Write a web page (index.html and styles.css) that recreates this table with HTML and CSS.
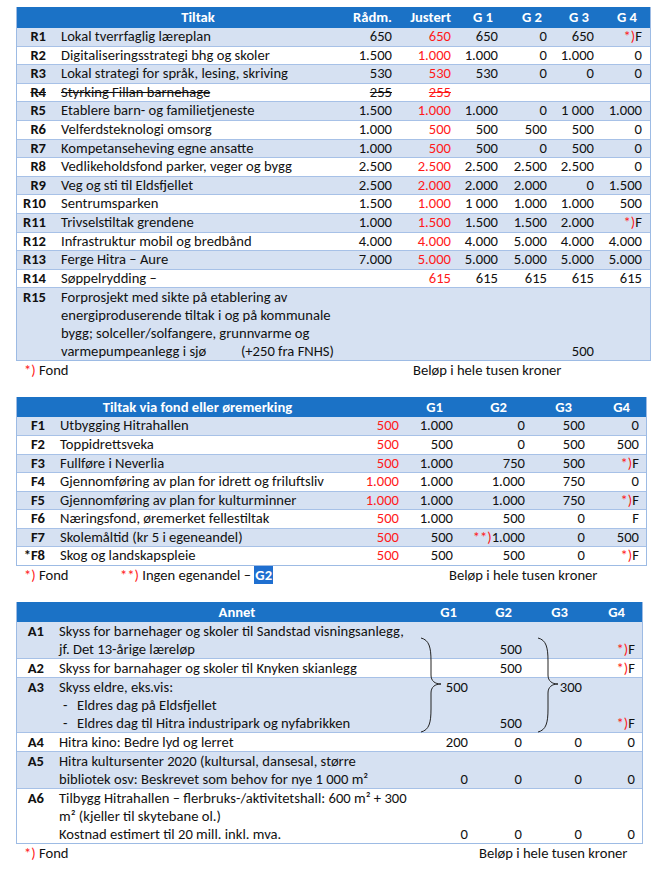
FILE: index.html
```html
<!DOCTYPE html>
<html lang="no">
<head>
<meta charset="utf-8">
<title>Tiltak</title>
<link rel="stylesheet" href="styles.css">
</head>
<body>
<div class="page">

  <section class="tbl t1">
    <div class="row head">
      <div class="c code"></div><div class="c txt ctr">Tiltak</div>
      <div class="c num">Rådm.</div><div class="c num">Justert</div>
      <div class="c num hg">G 1</div><div class="c num hg">G 2</div><div class="c num hg">G 3</div><div class="c num hg">G 4</div>
    </div>
    <div class="row alt"><div class="c code">R1</div><div class="c txt">Lokal tverrfaglig læreplan</div><div class="c num">650</div><div class="c num red">650</div><div class="c num">650</div><div class="c num">0</div><div class="c num">650</div><div class="c num"><span class="red">*)</span>F</div></div>
    <div class="row"><div class="c code">R2</div><div class="c txt">Digitaliseringsstrategi bhg og skoler</div><div class="c num">1.500</div><div class="c num red">1.000</div><div class="c num">1.000</div><div class="c num">0</div><div class="c num">1.000</div><div class="c num">0</div></div>
    <div class="row alt"><div class="c code">R3</div><div class="c txt">Lokal strategi for språk, lesing, skriving</div><div class="c num">530</div><div class="c num red">530</div><div class="c num">530</div><div class="c num">0</div><div class="c num">0</div><div class="c num">0</div></div>
    <div class="row"><div class="c code"><s>R4</s></div><div class="c txt"><s>Styrking Fillan barnehage</s></div><div class="c num"><s>255</s></div><div class="c num red"><s>255</s></div><div class="c num"></div><div class="c num"></div><div class="c num"></div><div class="c num"></div></div>
    <div class="row alt"><div class="c code">R5</div><div class="c txt">Etablere barn- og familietjeneste</div><div class="c num">1.500</div><div class="c num red">1.000</div><div class="c num">1.000</div><div class="c num">0</div><div class="c num">1 000</div><div class="c num">1.000</div></div>
    <div class="row"><div class="c code">R6</div><div class="c txt">Velferdsteknologi omsorg</div><div class="c num">1.000</div><div class="c num red">500</div><div class="c num">500</div><div class="c num">500</div><div class="c num">500</div><div class="c num">0</div></div>
    <div class="row alt"><div class="c code">R7</div><div class="c txt">Kompetanseheving egne ansatte</div><div class="c num">1.000</div><div class="c num red">500</div><div class="c num">500</div><div class="c num">0</div><div class="c num">500</div><div class="c num">0</div></div>
    <div class="row"><div class="c code">R8</div><div class="c txt">Vedlikeholdsfond parker, veger og bygg</div><div class="c num">2.500</div><div class="c num red">2.500</div><div class="c num">2.500</div><div class="c num">2.500</div><div class="c num">2.500</div><div class="c num">0</div></div>
    <div class="row alt"><div class="c code">R9</div><div class="c txt">Veg og sti til Eldsfjellet</div><div class="c num">2.500</div><div class="c num red">2.000</div><div class="c num">2.000</div><div class="c num">2.000</div><div class="c num">0</div><div class="c num">1.500</div></div>
    <div class="row"><div class="c code">R10</div><div class="c txt">Sentrumsparken</div><div class="c num">1.500</div><div class="c num red">1.000</div><div class="c num">1 000</div><div class="c num">1.000</div><div class="c num">1.000</div><div class="c num">500</div></div>
    <div class="row alt"><div class="c code">R11</div><div class="c txt">Trivselstiltak grendene</div><div class="c num">1.000</div><div class="c num red">1.500</div><div class="c num">1.500</div><div class="c num">1.500</div><div class="c num">2.000</div><div class="c num"><span class="red">*)</span>F</div></div>
    <div class="row"><div class="c code">R12</div><div class="c txt">Infrastruktur mobil og bredbånd</div><div class="c num">4.000</div><div class="c num red">4.000</div><div class="c num">4.000</div><div class="c num">5.000</div><div class="c num">4.000</div><div class="c num">4.000</div></div>
    <div class="row alt"><div class="c code">R13</div><div class="c txt">Ferge Hitra – Aure</div><div class="c num">7.000</div><div class="c num red">5.000</div><div class="c num">5.000</div><div class="c num">5.000</div><div class="c num">5.000</div><div class="c num">5.000</div></div>
    <div class="row"><div class="c code">R14</div><div class="c txt">Søppelrydding –</div><div class="c num"></div><div class="c num red">615</div><div class="c num">615</div><div class="c num">615</div><div class="c num">615</div><div class="c num">615</div></div>
    <div class="row alt last tall"><div class="c code">R15</div>
      <div class="c txt">Forprosjekt med sikte på etablering av<br>energiproduserende tiltak i og på kommunale<br>bygg; solceller/solfangere, grunnvarme og<br><span class="split"><span>varmepumpeanlegg i sjø</span><span>(+250 fra FNHS)</span></span></div>
      <div class="c num"></div><div class="c num"></div><div class="c num"></div><div class="c num"></div><div class="c num b">500</div><div class="c num"></div></div>
  </section>
  <div class="note n1"><span class="fn"><span class="red">*)</span> Fond</span><span>Beløp i hele tusen kroner</span></div>

  <section class="tbl t2">
    <div class="row head">
      <div class="c code"></div><div class="c txt ctr">Tiltak via fond eller øremerking</div>
      <div class="c num"></div>
      <div class="c num h1">G1</div><div class="c num h2">G2</div><div class="c num h3">G3</div><div class="c num h4">G4</div>
    </div>
    <div class="row alt"><div class="c code">F1</div><div class="c txt">Utbygging Hitrahallen</div><div class="c num red">500</div><div class="c num">1.000</div><div class="c num">0</div><div class="c num">500</div><div class="c num">0</div></div>
    <div class="row"><div class="c code">F2</div><div class="c txt">Toppidrettsveka</div><div class="c num red">500</div><div class="c num">500</div><div class="c num">0</div><div class="c num">500</div><div class="c num">500</div></div>
    <div class="row alt"><div class="c code">F3</div><div class="c txt">Fullføre i Neverlia</div><div class="c num red">500</div><div class="c num">1.000</div><div class="c num">750</div><div class="c num">500</div><div class="c num"><span class="red">*)</span>F</div></div>
    <div class="row"><div class="c code">F4</div><div class="c txt">Gjennomføring av plan for idrett og friluftsliv</div><div class="c num red">1.000</div><div class="c num">1.000</div><div class="c num">1.000</div><div class="c num">750</div><div class="c num">0</div></div>
    <div class="row alt"><div class="c code">F5</div><div class="c txt">Gjennomføring av plan for kulturminner</div><div class="c num red">1.000</div><div class="c num">1.000</div><div class="c num">1.000</div><div class="c num">750</div><div class="c num"><span class="red">*)</span>F</div></div>
    <div class="row"><div class="c code">F6</div><div class="c txt">Næringsfond, øremerket fellestiltak</div><div class="c num red">500</div><div class="c num">1.000</div><div class="c num">500</div><div class="c num">0</div><div class="c num">F</div></div>
    <div class="row alt"><div class="c code">F7</div><div class="c txt">Skolemåltid (kr 5 i egeneandel)</div><div class="c num red">500</div><div class="c num">500</div><div class="c num"><span class="red">**)</span>1.000</div><div class="c num">0</div><div class="c num">500</div></div>
    <div class="row last"><div class="c code">*F8</div><div class="c txt">Skog og landskapspleie</div><div class="c num red">500</div><div class="c num">500</div><div class="c num">500</div><div class="c num">0</div><div class="c num"><span class="red">*)</span>F</div></div>
  </section>
  <div class="note n2"><span class="fn"><span class="red">*)</span> Fond</span><span class="ing"><span class="red">**)</span> Ingen egenandel – <span class="sel">G2</span></span><span>Beløp i hele tusen kroner</span></div>

  <section class="tbl t3">
    <div class="row head">
      <div class="c code"></div><div class="c txt ctr">Annet</div>
      <div class="c num h1">G1</div><div class="c num h2">G2</div><div class="c num h3">G3</div><div class="c num h4">G4</div>
    </div>
    <div class="row alt"><div class="c code">A1</div><div class="c txt">Skyss for barnehager og skoler til Sandstad visningsanlegg,<br>jf. Det 13-årige læreløp</div><div class="c num"></div><div class="c num b">500</div><div class="c num"></div><div class="c num b"><span class="red">*)</span>F</div></div>
    <div class="row"><div class="c code">A2</div><div class="c txt">Skyss for barnahager og skoler til Knyken skianlegg</div><div class="c num"></div><div class="c num">500</div><div class="c num"></div><div class="c num"><span class="red">*)</span>F</div></div>
    <div class="row alt"><div class="c code">A3</div><div class="c txt">Skyss eldre, eks.vis:<br><span class="dash">-</span>Eldres dag på Eldsfjellet<br><span class="dash">-</span>Eldres dag til Hitra industripark og nyfabrikken</div><div class="c num t">500</div><div class="c num b">500</div><div class="c num t">300</div><div class="c num b"><span class="red">*)</span>F</div></div>
    <div class="row"><div class="c code">A4</div><div class="c txt">Hitra kino: Bedre lyd og lerret</div><div class="c num">200</div><div class="c num">0</div><div class="c num">0</div><div class="c num">0</div></div>
    <div class="row alt"><div class="c code">A5</div><div class="c txt">Hitra kultursenter 2020 (kultursal, dansesal, større<br>bibliotek osv: Beskrevet som behov for nye 1 000 m²</div><div class="c num b">0</div><div class="c num b">0</div><div class="c num b">0</div><div class="c num b">0</div></div>
    <div class="row last"><div class="c code">A6</div><div class="c txt">Tilbygg Hitrahallen – flerbruks-/aktivitetshall: 600 m² + 300<br>m² (kjeller til skytebane ol.)<br>Kostnad estimert til 20 mill. inkl. mva.</div><div class="c num b">0</div><div class="c num b">0</div><div class="c num b">0</div><div class="c num b">0</div></div>
    <svg class="brace br1" width="22" height="96" viewBox="0 0 22 96"><path d="M1 1 C9 3 11 10 11 24 L11 38 C11 44 15 47 21 47 C15 47 11 50 11 56 L11 72 C11 86 9 93 1 95" fill="none" stroke="#222" stroke-width="1"/></svg>
    <svg class="brace br2" width="22" height="96" viewBox="0 0 22 96"><path d="M1 1 C9 3 11 10 11 24 L11 38 C11 44 15 47 21 47 C15 47 11 50 11 56 L11 72 C11 86 9 93 1 95" fill="none" stroke="#222" stroke-width="1"/></svg>
  </section>
  <div class="note n3"><span class="fn"><span class="red">*)</span> Fond</span><span>Beløp i hele tusen kroner</span></div>

</div>
</body>
</html>
```

FILE: styles.css
```css
html, body {
  margin: 0;
  padding: 0;
  background: #ffffff;
}
body {
  font-family: Carlito, Lato, "Liberation Sans", sans-serif;
  font-size: 14.6px;
  color: #111;
}
.page {
  padding: 7px 0 0 16px;
}
.tbl {
  position: relative;
  border: 1px solid #9dbbe4;
  border-top: none;
  box-sizing: border-box;
}
.t1 { width: 635px; }
.t2 { width: 631px; }
.t3 { width: 627px; }

.row {
  display: grid;
  line-height: 17.6px;
  border-bottom: 1px solid #a7c1e7;
  background: #ffffff;
}
.row.last { border-bottom: none; }
.row.tall { line-height: 18px; }
.t3 .row { line-height: 18px; }
.row.alt { background: #d6e1f2; }
.row.head {
  background: #1b72c6;
  color: #ffffff;
  font-weight: 700;
  line-height: 21px;
  border-bottom: none;
}
.t2 .row.head, .t3 .row.head { line-height: 20px; }

.t1 .row { grid-template-columns: 29px 294px 52px 59px 47px 49px 47px 48px; padding-right: 7px; }
.t2 .row { grid-template-columns: 28px 305px 49px 54px 72px 60px 54px; padding-right: 7px; }
.t3 .row { grid-template-columns: 27px 386px 38px 54px 60px 53px; padding-right: 7px; }

.c { white-space: nowrap; }
.code { font-weight: 700; text-align: right; }
.txt { padding-left: 15px; }
.txt.ctr { text-align: center; padding-left: 0; }
.t1 .txt.ctr { padding-left: 10px; }
.num { text-align: right; }
.b { align-self: end; }
.t { align-self: start; }
.red { color: #ff1a1a; }
s { text-decoration-thickness: 1px; }

.t1 .hg { padding-right: 5px; }
.t2 .h1 { padding-right: 10px; }
.t2 .h2 { padding-right: 18px; }
.t2 .h3 { padding-right: 13px; }
.t2 .h4 { padding-right: 9px; }
.t3 .h1 { padding-right: 11px; }
.t3 .h2 { padding-right: 10px; }
.t3 .h3 { padding-right: 14px; }
.t3 .h4 { padding-right: 10px; }

.split {
  display: inline-flex;
  justify-content: space-between;
  width: 273px;
}
.dash {
  display: inline-block;
  width: 14px;
  padding-left: 4px;
  box-sizing: content-box;
}

.brace { position: absolute; }
.br1 { left: 403px; top: 35px; }
.br2 { left: 520px; top: 35px; }

.note {
  display: flex;
  line-height: 18px;
  padding-left: 8px;
  margin-bottom: 18px;
}
.n1 .fn { width: 389px; }
.n2 .fn { width: 96px; }
.n2 .ing { width: 329px; }
.n3 .fn { width: 455px; }
.sel {
  background: #1f6fd0;
  color: #ffffff;
  font-weight: 700;
  padding: 0 1px;
}
```
